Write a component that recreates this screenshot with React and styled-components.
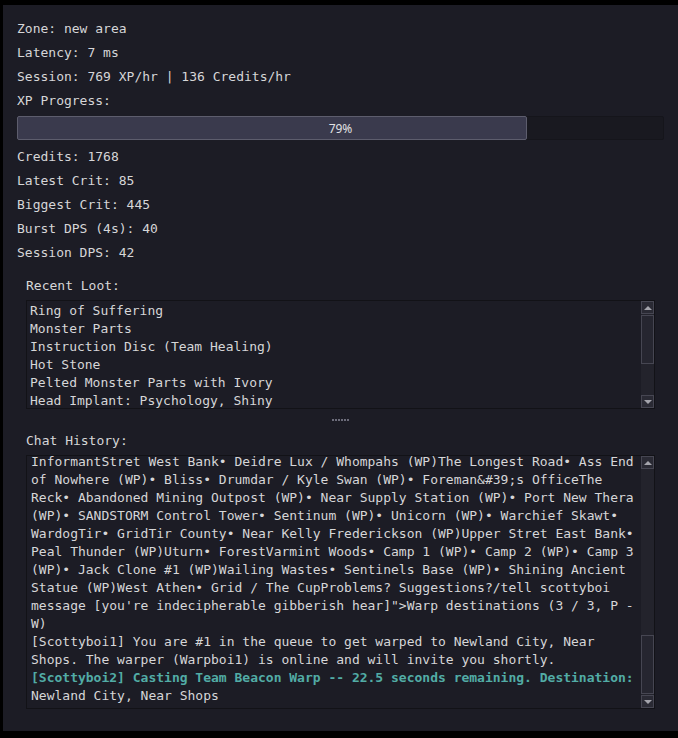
import React from 'react';
import styled, { createGlobalStyle } from 'styled-components';

const GlobalStyle = createGlobalStyle`
  html, body {
    margin: 0;
    background: #000;
  }
  body {
    overflow: hidden;
  }
`;

const stats = [
  'Zone: new area',
  'Latency: 7 ms',
  'Session: 769 XP/hr | 136 Credits/hr',
  'XP Progress:',
];

const combat = [
  'Credits: 1768',
  'Latest Crit: 85',
  'Biggest Crit: 445',
  'Burst DPS (4s): 40',
  'Session DPS: 42',
];

const loot = [
  'Ring of Suffering',
  'Monster Parts',
  'Instruction Disc (Team Healing)',
  'Hot Stone',
  'Pelted Monster Parts with Ivory',
  'Head Implant: Psychology, Shiny',
];

export default function App() {
  return (
    <>
      <GlobalStyle />
      <Panel>
        {stats.map((s) => (
          <StatRow key={s}>{s}</StatRow>
        ))}
        <ProgressTrack>
          <ProgressFill $pct={79} />
          <ProgressLabel>79%</ProgressLabel>
        </ProgressTrack>
        {combat.map((s) => (
          <StatRow key={s}>{s}</StatRow>
        ))}

        <Section>
          <SectionLabel>Recent Loot:</SectionLabel>
          <ListBox $height={109}>
            <LootList>
              {loot.map((item) => (
                <LootItem key={item}>{item}</LootItem>
              ))}
            </LootList>
            <Scrollbar offset={1} size={49} />
          </ListBox>
          <Splitter>
            {[0, 1, 2, 3, 4, 5].map((i) => (
              <Dot key={i} />
            ))}
          </Splitter>
          <SectionLabel>Chat History:</SectionLabel>
          <ListBox $height={254}>
            <ChatLog>
              <ChatLine>
                InformantStret West Bank• Deidre Lux / Whompahs (WP)The Longest Road• Ass End of
                Nowhere (WP)• Bliss• Drumdar / Kyle Swan (WP)• Foreman&amp;#39;s OfficeThe Reck•
                Abandoned Mining Outpost (WP)• Near Supply Station (WP)• Port New Thera (WP)•
                SANDSTORM Control Tower• Sentinum (WP)• Unicorn (WP)• Warchief Skawt• WardogTir•
                GridTir County• Near Kelly Frederickson (WP)Upper Stret East Bank• Peal Thunder
                (WP)Uturn• ForestVarmint Woods• Camp 1 (WP)• Camp 2 (WP)• Camp 3 (WP)• Jack Clone
                #1 (WP)Wailing Wastes• Sentinels Base (WP)• Shining Ancient Statue (WP)West Athen•
                Grid / The CupProblems? Suggestions?/tell scottyboi message [you're indecipherable
                gibberish hear]"&gt;Warp destinations (3 / 3, P - W)
              </ChatLine>
              <ChatLine>
                [Scottyboi1] You are #1 in the queue to get warped to Newland City, Near Shops. The
                warper (Warpboi1) is online and will invite you shortly.
              </ChatLine>
              <ChatLine>
                <Highlight>
                  [Scottyboi2] Casting Team Beacon Warp -- 22.5 seconds remaining. Destination:
                </Highlight>{' '}
                Newland City, Near Shops
              </ChatLine>
            </ChatLog>
            <Scrollbar offset={166} size={59} />
          </ListBox>
        </Section>
      </Panel>
    </>
  );
}

const Scrollbar = ({ offset, size }) => (
  <Bar>
    <ArrowBtn>
      <Triangle $dir="up" />
    </ArrowBtn>
    <Track>
      <Thumb $offset={offset} $size={size} />
    </Track>
    <ArrowBtn>
      <Triangle $dir="down" />
    </ArrowBtn>
  </Bar>
);

const Panel = styled.div`
  box-sizing: border-box;
  margin: 5px 0 0 3px;
  width: calc(100vw - 3px);
  height: 726px;
  padding: 12px 14px 0 14px;
  background: #1c1c25;
  color: #d6d6d8;
  font-family: 'DejaVu Sans Mono', 'Liberation Mono', monospace;
  font-size: 13px;
`;

const StatRow = styled.div`
  line-height: 24px;
  white-space: nowrap;
`;

const ProgressTrack = styled.div`
  display: grid;
  height: 24px;
  margin: 3px 0 5px;
  box-sizing: border-box;
  background: #191920;
  border: 1px solid #15151b;
  border-radius: 2px;
`;

const ProgressFill = styled.div`
  grid-area: 1 / 1;
  width: ${(p) => p.$pct}%;
  margin: -1px 0 -1px -1px;
  box-sizing: border-box;
  background: #3a3a4d;
  border: 1px solid #5d5d6d;
  border-radius: 2px;
`;

const ProgressLabel = styled.span`
  grid-area: 1 / 1;
  justify-self: center;
  align-self: center;
  font-family: 'Noto Sans', 'DejaVu Sans', sans-serif;
  font-size: 12px;
  color: #e2e2e4;
`;

const Section = styled.div`
  margin-top: 11px;
  padding: 0 9px;
`;

const SectionLabel = styled.div`
  line-height: 18px;
  padding-top: 1px;
  margin-bottom: 5px;
`;

const ListBox = styled.div`
  display: flex;
  box-sizing: border-box;
  height: ${(p) => p.$height}px;
  border: 1px solid #121217;
  background: #1c1c25;
`;

const LootList = styled.div`
  flex: 1;
  overflow: hidden;
  padding: 1px 4px 0 3px;
`;

const LootItem = styled.div`
  line-height: 18px;
  white-space: nowrap;
`;

const ChatLog = styled.div`
  flex: 1;
  display: flex;
  flex-direction: column;
  justify-content: flex-end;
  overflow: hidden;
  padding: 0 5px 3px 4px;
  line-height: 18px;
`;

const ChatLine = styled.div`
  flex-shrink: 0;
`;

const Highlight = styled.span`
  color: #52aca6;
  font-weight: bold;
`;

const Splitter = styled.div`
  height: 22px;
  display: flex;
  align-items: center;
  justify-content: center;
  gap: 1px;
`;

const Dot = styled.span`
  width: 2px;
  height: 2px;
  background: #6c6c7a;
`;

const Bar = styled.div`
  width: 13px;
  display: flex;
  flex-direction: column;
  background: #22222b;
`;

const ArrowBtn = styled.div`
  box-sizing: border-box;
  height: 13px;
  flex-shrink: 0;
  display: flex;
  align-items: center;
  justify-content: center;
  background: #2a2a34;
  border: 1px solid #464652;
`;

const Triangle = styled.span`
  width: 0;
  height: 0;
  border-left: 4px solid transparent;
  border-right: 4px solid transparent;
  ${(p) =>
    p.$dir === 'up'
      ? 'border-bottom: 4px solid #a4a4ac;'
      : 'border-top: 4px solid #a4a4ac;'}
`;

const Track = styled.div`
  flex: 1;
  display: flex;
  flex-direction: column;
  background: #23232c;
`;

const Thumb = styled.div`
  box-sizing: border-box;
  margin-top: ${(p) => p.$offset}px;
  height: ${(p) => p.$size}px;
  background: #262630;
  border: 1px solid #464652;
`;
